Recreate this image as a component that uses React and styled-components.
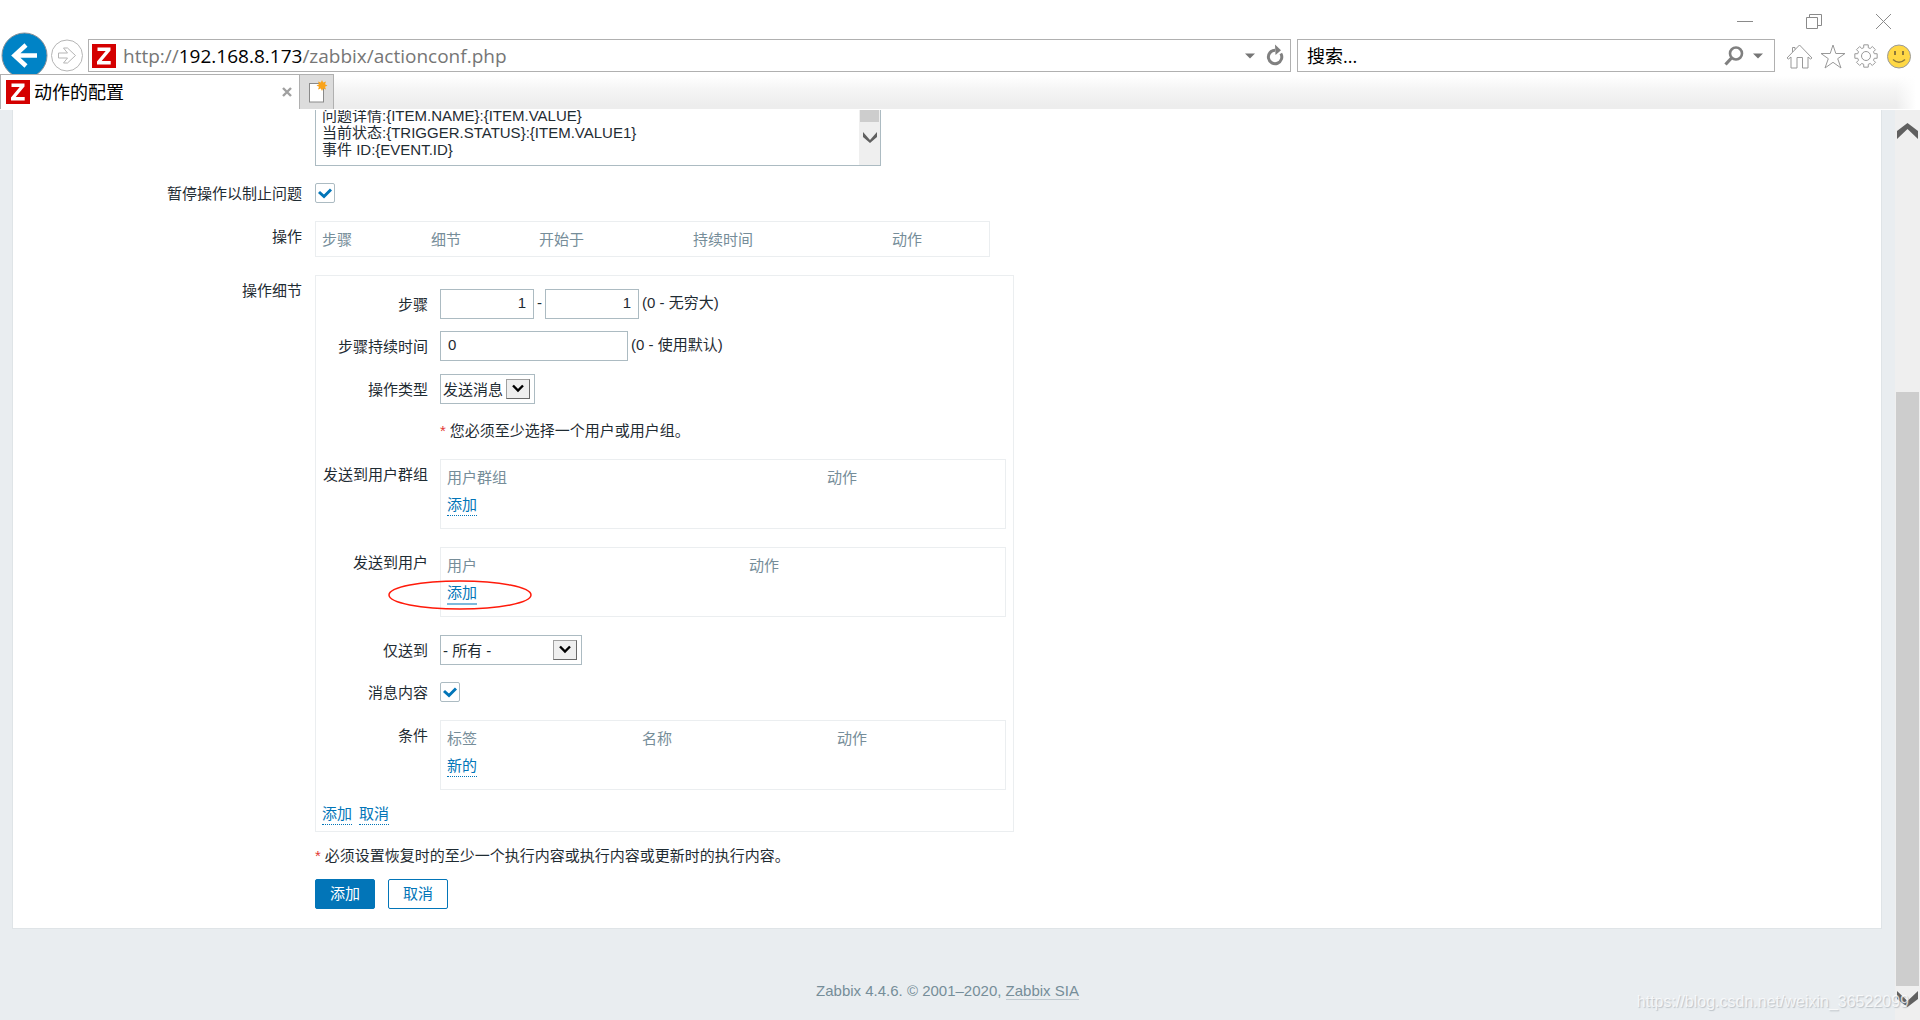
import React from "react";
import styled, { createGlobalStyle, css } from "styled-components";

const uiFont = '"Open Sans", "Noto Sans CJK SC", sans-serif';
const pageFont = '"Liberation Sans", "Noto Sans CJK SC", sans-serif';

const GlobalStyle = createGlobalStyle`
  *, *::before, *::after { box-sizing: border-box; }
  body { margin: 0; background: #fff; }
  button, input, select, textarea { font: inherit; color: inherit; margin: 0; border-radius: 0; }
`;

const Shell = styled.div`
  display: flex;
  flex-direction: column;
  min-height: 100vh;
  overflow: hidden;
  position: relative;
  font: 15px/30px ${pageFont};
  color: #1f2c33;
`;

/* ---------- browser chrome ---------- */

const TitleBar = styled.div`
  display: flex;
  justify-content: flex-end;
  gap: 53px;
  height: 39px;
  padding: 13px 28px 0 0;
`;

const PlainButton = styled.button`
  display: block;
  flex: none;
  padding: 0;
  border: 0;
  background: none;
  height: ${(p) => p.$h || 24}px;
  line-height: 0;
  svg { display: block; }
`;

const NavBar = styled.div`
  display: flex;
  align-items: flex-start;
  height: 35px;
  padding-right: 8px;
`;

const HistoryButtons = styled.div`
  display: flex;
  align-items: flex-start;
  width: 88px;
  height: 42px;
  flex: none;
  margin-top: -7px;
  overflow: hidden;
`;

const Field = styled.div`
  display: flex;
  align-items: center;
  height: 33px;
  border: 1px solid #b0b0b0;
  background: #fff;
  font: 19px/30px ${uiFont};
`;

const AddressField = styled(Field)`
  flex: 1;
  padding: 0 6px 0 3px;
  gap: 11px;
`;

const Address = styled.div`
  flex: 1;
  color: #767676;
  white-space: nowrap;
  overflow: hidden;
  margin-left: -4px;
  b { font-weight: 400; color: #000; }
`;

const SearchField = styled(Field)`
  width: 478px;
  margin: 0 11px 0 6px;
  padding: 0 11px 0 9px;
  gap: 9px;
`;

const SearchInput = styled.input`
  flex: 1;
  min-width: 0;
  padding: 0;
  border: 0;
  outline: 0;
  background: none;
  font: 18px/30px ${uiFont};
  &::placeholder { color: #000; opacity: 1; }
`;

const Tools = styled.div`
  display: flex;
  gap: 7px;
  padding-top: 5px;
`;

const TabStrip = styled.div`
  display: flex;
  height: 35px;
  margin-bottom: 1px;
  background: linear-gradient(90deg, transparent calc(100% - 24px), #fff calc(100% - 4px)),
    linear-gradient(#fff 2px, #f6f6f6 14px, #ededed 32px);
`;

const Tab = styled.div`
  display: flex;
  align-items: center;
  width: 300px;
  padding: 0 7px 0 5px;
  gap: 4px;
  border: 1px solid #b0b0b0;
  border-bottom: 0;
  background: #fff;
`;

const TabTitle = styled.span`
  flex: 1;
  color: #000;
  font: 18px/30px ${uiFont};
`;

const NewTab = styled.button`
  width: 34px;
  padding: 0;
  border: 1px solid #b0b0b0;
  border-width: 1px 1px 0 0;
  background: #dcdcdc;
  svg { display: block; margin: 0 auto; }
`;

/* ---------- page ---------- */

const Viewport = styled.div`
  display: flex;
  flex: 1;
  background: #e9edf0;
  overflow: hidden;
`;

const Page = styled.div`
  flex: 1;
  min-width: 0;
`;

const Panel = styled.main`
  margin: 0 13px 0 12px;
  padding-bottom: 19px;
  border: 1px solid #dfe4e7;
  border-top: 0;
  background: #fff;
`;

const Row = styled.div`
  display: flex;
  margin-top: ${(p) => p.$gap || 0}px;
`;

const labelBox = css`
  flex: none;
  height: 30px;
  text-align: right;
  line-height: 32px;
  white-space: nowrap;
`;

const Label = styled.label`
  ${labelBox}
  width: 289px;
  margin-right: 13px;
`;

const InnerLabel = styled.label`
  ${labelBox}
  width: 106px;
  margin-right: 12px;
`;

const Cell = styled.div`
  display: flex;
  align-items: center;
  height: 30px;
  gap: ${(p) => p.$gap || 0}px;
`;

const MessageBox = styled.div`
  display: flex;
  width: 566px;
  height: 66px;
  margin-top: -10px;
  border: 1px solid #acbbc2;
`;

const MessageText = styled.textarea`
  flex: 1;
  padding: 6px 6px 0;
  border: 0;
  outline: 0;
  resize: none;
  overflow: hidden;
  line-height: 17px;
  background: #fff;
`;

const MessageScroll = styled.div`
  width: 21px;
  background: #efefef;
`;

const MessageThumb = styled.div`
  height: 21px;
  margin: 0 1px 10px;
  background: #cdcdcd;
`;

const Tick = styled.span`
  position: relative;
  display: block;
  width: 20px;
  height: 20px;
  input {
    display: block;
    appearance: none;
    width: 20px;
    height: 20px;
    border: 1px solid #acbbc2;
    border-radius: 2px;
    background: #fff;
  }
  svg { position: absolute; left: 3px; top: 5px; pointer-events: none; }
`;

const TextInput = styled.input`
  width: ${(p) => p.$w}px;
  height: 30px;
  padding: 0 7px 2px 7px;
  border: 1px solid #acbbc2;
  background: #fff;
  text-align: ${(p) => p.$align || "left"};
`;

const Hint = styled.span`
  line-height: 28px;
  padding-bottom: 2px;
`;

const SelectWrap = styled.span`
  position: relative;
  display: block;
  width: ${(p) => p.$w}px;
  select {
    display: block;
    appearance: none;
    width: 100%;
    height: 30px;
    padding: 0 30px 2px 2px;
    border: 1px solid #acbbc2;
    background: #fff;
  }
`;

const SelectArrow = styled.span`
  position: absolute;
  right: 5px;
  top: 5px;
  width: 24px;
  height: 20px;
  border: 1px solid #a0a0a0;
  border-right-color: #696969;
  border-bottom-color: #696969;
  background: #efefef;
  pointer-events: none;
  svg { display: block; margin: 4px auto 0; }
`;

const Grid = styled.table`
  width: ${(p) => p.$w}px;
  table-layout: fixed;
  border: 1px solid #ebeef0;
  border-spacing: 0;
  padding: 5px 0 ${(p) => (p.$filled ? 9 : 3)}px;
  line-height: 26px;
  th, td { padding: 0 0 0 6px; text-align: left; font-weight: 400; white-space: nowrap; }
  th { color: #768d99; }
  td { line-height: 28px; }
`;

const Link = styled.a`
  display: inline-block;
  line-height: 20px;
  color: #0275b8;
  text-decoration: none;
  border-bottom: ${(p) => (p.$focused ? "2px solid #7db9dc" : "1px dotted #0275b8")};
`;

const Details = styled.section`
  width: 699px;
  padding: 13px 7px 2px 6px;
  border: 1px solid #ebeef0;
`;

const LinkBar = styled.div`
  display: flex;
  align-items: center;
  gap: 7px;
  height: 30px;
  margin-top: 9px;
`;

const Required = styled.p`
  margin: 0;
  span { color: #e33734; margin-right: 4px; }
`;

const ActionButton = styled.button`
  width: 60px;
  height: 30px;
  padding: 0;
  border: 1px solid #0275b8;
  border-radius: 2px;
  line-height: 28px;
  background: ${(p) => (p.$primary ? "#0275b8" : "#fff")};
  color: ${(p) => (p.$primary ? "#fff" : "#0275b8")};
`;

const Indent = styled.div`
  margin: ${(p) => p.$gap}px 0 0 302px;
  display: flex;
  gap: 13px;
`;

const Footer = styled.footer`
  margin: 52px 0 18px;
  text-align: center;
  line-height: 20px;
  color: #768d99;
  a { color: inherit; text-decoration: none; border-bottom: 1px solid #c0cad0; }
`;

const ScrollBar = styled.div`
  display: flex;
  flex-direction: column;
  width: 25px;
  padding: 13px 1px;
  background: #efefef;
`;

const ScrollThumb = styled.div`
  flex: 1;
  margin: 253px 0 5px;
  background: #cdcdcd;
`;

const Ring = styled.svg`
  position: absolute;
  left: -58px;
  top: 32px;
  overflow: visible;
  pointer-events: none;
`;

const Marked = styled.div`
  position: relative;
`;

const Watermark = styled.div`
  position: absolute;
  right: 11px;
  bottom: 8px;
  font-size: 16px;
  line-height: 20px;
  color: rgba(255, 255, 255, 0.75);
  text-shadow: 1px 1px 1px rgba(120, 130, 140, 0.4);
  pointer-events: none;
`;

/* ---------- drawings ---------- */

const Favicon = () => (
  <svg width="24" height="24" viewBox="0 0 24 24">
    <rect width="24" height="24" fill="#d40000" />
    <path d="M5.5 3.5h13v3L9.7 17h9v3.5H5v-3L13.700 7H5.500z" fill="#fff" />
  </svg>
);

const Chevron = ({ up, w = 21, h = 16, t = 8 }) => (
  <svg width={w} height={h} viewBox={`0 0 ${w} ${h}`} style={{ display: "block", margin: "0 auto" }}>
    <path
      fill="#606060"
      d={
        up
          ? `M${w / 2} 0L${w} ${h - t}V${h}L${w / 2} ${t - 2}L0 ${h}V${h - t}z`
          : `M${w / 2} ${h}L${w} ${t}V0L${w / 2} ${h - t + 2}L0 0V${t}z`
      }
    />
  </svg>
);

const Caret = () => (
  <svg width="10" height="6" viewBox="0 0 10 6">
    <path d="M0 0.500h10L5 5.500z" fill="#767676" />
  </svg>
);

const gearPath = (() => {
  const pts = [];
  for (let i = 0; i < 8; i++) {
    const a = (i * Math.PI) / 4;
    [[-0.27, 8.6], [-0.2, 11.4], [0.2, 11.4], [0.27, 8.6]].forEach(([d, r]) => {
      pts.push(`${(12 + r * Math.sin(a + d)).toFixed(2)} ${(12 - r * Math.cos(a + d)).toFixed(2)}`);
    });
  }
  return `M${pts.join("L")}z`;
})();

const TickBox = ({ id }) => (
  <Tick>
    <input type="checkbox" id={id} defaultChecked />
    <svg width="14" height="11" viewBox="0 0 14 11">
      <path d="M1 4l5 4.500L13 1.500" fill="none" stroke="#0275b8" strokeWidth="3" />
    </svg>
  </Tick>
);

const Select = ({ id, w, text }) => (
  <SelectWrap $w={w}>
    <select id={id}>
      <option>{text}</option>
    </select>
    <SelectArrow>
      <svg width="12" height="9" viewBox="0 0 12 9">
        <path d="M1 1.500l5 5 5-5" fill="none" stroke="#000" strokeWidth="2.400" />
      </svg>
    </SelectArrow>
  </SelectWrap>
);

const DataGrid = ({ w, cols, link, focused, labelledBy }) => (
  <Grid $w={w} $filled={!!link} aria-labelledby={labelledBy}>
    <colgroup>
      {cols.map(([name, width]) => (
        <col key={name} width={width} />
      ))}
    </colgroup>
    <thead>
      <tr>
        {cols.map(([name]) => (
          <th key={name}>{name}</th>
        ))}
      </tr>
    </thead>
    {link && (
      <tbody>
        <tr>
          <td colSpan={cols.length}>
            <Link href="#" $focused={focused}>{link}</Link>
          </td>
        </tr>
      </tbody>
    )}
  </Grid>
);

const message = `问题详情:{ITEM.NAME}:{ITEM.VALUE}
当前状态:{TRIGGER.STATUS}:{ITEM.VALUE1}
事件 ID:{EVENT.ID}`;

const BrowserChrome = () => (
  <header>
    <TitleBar>
      <PlainButton $h={17} aria-label="最小化">
        <svg width="16" height="17" fill="none" stroke="#8a8a8a"><path d="M0 8.500h16" /></svg>
      </PlainButton>
      <PlainButton $h={17} aria-label="还原">
        <svg width="16" height="17" fill="none" stroke="#8a8a8a">
          <path d="M.5 4.500h11v11H.5zM3.500 4.500v-3h12v11h-4" />
        </svg>
      </PlainButton>
      <PlainButton $h={17} aria-label="关闭">
        <svg width="17" height="17" fill="none" stroke="#8a8a8a"><path d="M1 1l15 15M16 1L1 16" /></svg>
      </PlainButton>
    </TitleBar>
    <NavBar>
      <HistoryButtons>
        <PlainButton $h={42} aria-label="后退">
          <svg width="49" height="42" viewBox="0 0 49 42">
            <circle cx="24.500" cy="23.500" r="22.500" fill="#0083c6" stroke="#8b9299" />
            <path d="M26 13L14.500 23.500L26 34M15 23.500h22" fill="none" stroke="#fff" strokeWidth="4.500" />
          </svg>
        </PlainButton>
        <PlainButton $h={42} aria-label="前进">
          <svg width="36" height="42" viewBox="0 0 36 42" fill="none" stroke="#b5b5b5">
            <circle cx="18" cy="23.500" r="15.500" />
            <path d="M9.500 21h9l-4-5h4l8 7.500-8 7.500h-4l4-5h-9z" />
          </svg>
        </PlainButton>
      </HistoryButtons>
      <AddressField>
        <Favicon />
        <Address role="textbox" aria-label="地址">
          http://<b>192.168.8.173</b>/zabbix/actionconf.php
        </Address>
        <Caret />
        <PlainButton aria-label="刷新">
          <svg width="18" height="24" viewBox="0 0 18 24">
            <path d="M14.800 9.500A6.700 6.700 0 1 1 9 6.300" fill="none" stroke="#808080" strokeWidth="3" />
            <path d="M9 0.500L15 6.300L9.500 11z" fill="#808080" />
          </svg>
        </PlainButton>
      </AddressField>
      <SearchField>
        <SearchInput type="search" placeholder="搜索..." aria-label="搜索" />
        <PlainButton $h={20} aria-label="搜索">
          <svg width="20" height="20" viewBox="0 0 20 20" fill="none" stroke="#808080">
            <circle cx="12" cy="7.500" r="6" strokeWidth="2.600" />
            <path d="M7.500 12L1.500 18.500" strokeWidth="3.200" />
          </svg>
        </PlainButton>
        <Caret />
      </SearchField>
      <Tools>
        <PlainButton aria-label="主页">
          <svg width="27" height="25" viewBox="0 0 27 25" fill="none" stroke="#999">
            <path d="M1 14L13.500 1L26 14L24.500 15L22 13V24H16.500V13.500H11V24H5V13L2.500 15zM6.500 8V3.500H9V5.500" />
          </svg>
        </PlainButton>
        <PlainButton aria-label="收藏夹">
          <svg width="26" height="25" viewBox="0 0 26 25" fill="none" stroke="#999">
            <path d="M13 1L15.800 9.500H25L17.700 14.700L21 24L13 18.300L5 24L8.300 14.700L1 9.500H10.200z" />
          </svg>
        </PlainButton>
        <PlainButton aria-label="工具">
          <svg width="26" height="24" viewBox="-1 0 26 24" fill="none" stroke="#999">
            <path d={gearPath} strokeLinejoin="round" />
            <circle cx="12" cy="12" r="4.500" />
          </svg>
        </PlainButton>
        <PlainButton aria-label="反馈">
          <svg width="26" height="25" viewBox="0 0 26 25">
            <circle cx="13" cy="12.500" r="11.500" fill="#ffd845" stroke="#9a9a9a" />
            <path d="M9 7v4M17 7v4" stroke="#8f7a3a" strokeWidth="2" />
            <path d="M7 15.500Q13 21 19 15.500" fill="none" stroke="#8f7a3a" strokeWidth="1.500" />
          </svg>
        </PlainButton>
      </Tools>
    </NavBar>
    <TabStrip>
      <Tab>
        <Favicon />
        <TabTitle>动作的配置</TabTitle>
        <PlainButton $h={10} aria-label="关闭标签页">
          <svg width="10" height="10" viewBox="0 0 10 10">
            <path d="M1 1l8 8M9 1L1 9" stroke="#a0a0a0" strokeWidth="2.400" />
          </svg>
        </PlainButton>
      </Tab>
      <NewTab aria-label="新建标签页">
        <svg width="22" height="24" viewBox="0 0 22 24">
          <rect x="3.500" y="3.500" width="14" height="18.500" fill="#fff" stroke="#8a8a8a" />
          <path
            d="M16 0l1.200 2.600L20 1.500l-1 2.800L21.500 5.500 19 6.700l1 2.800-2.800-1L16 11l-1.200-2.500-2.800 1 1-2.800L10.500 5.500 13 4.300l-1-2.800 2.800 1.100z"
            fill="#f9a31a"
          />
        </svg>
      </NewTab>
    </TabStrip>
  </header>
);

export default function App() {
  return (
    <>
      <GlobalStyle />
      <Shell>
        <BrowserChrome />
        <Viewport>
          <Page>
            <Panel>
              <Row>
                <Label as="span" />
                <MessageBox>
                  <MessageText aria-label="默认信息" defaultValue={message} />
                  <MessageScroll>
                    <MessageThumb />
                    <Chevron w={14} h={11} t={5} />
                  </MessageScroll>
                </MessageBox>
              </Row>
              <Row $gap={12}>
                <Label htmlFor="pause">暂停操作以制止问题</Label>
                <Cell><TickBox id="pause" /></Cell>
              </Row>
              <Row $gap={13}>
                <Label as="span" id="ops">操作</Label>
                <DataGrid
                  w={675}
                  labelledBy="ops"
                  cols={[["步骤", 109], ["细节", 108], ["开始于", 154], ["持续时间", 199], ["动作", 103]]}
                />
              </Row>
              <Row $gap={18}>
                <Label as="span" id="details">操作细节</Label>
                <Details aria-labelledby="details">
                  <Row>
                    <InnerLabel htmlFor="from">步骤</InnerLabel>
                    <Cell $gap={3}>
                      <TextInput id="from" $w={94} $align="right" defaultValue="1" />
                      <Hint>-</Hint>
                      <TextInput aria-label="步骤至" $w={94} $align="right" defaultValue="1" />
                      <Hint>(0 - 无穷大)</Hint>
                    </Cell>
                  </Row>
                  <Row $gap={12}>
                    <InnerLabel htmlFor="duration">步骤持续时间</InnerLabel>
                    <Cell $gap={3}>
                      <TextInput id="duration" $w={188} defaultValue="0" />
                      <Hint>(0 - 使用默认)</Hint>
                    </Cell>
                  </Row>
                  <Row $gap={13}>
                    <InnerLabel htmlFor="type">操作类型</InnerLabel>
                    <Select id="type" w={95} text="发送消息" />
                  </Row>
                  <Row $gap={12}>
                    <InnerLabel as="span" />
                    <Required><span>*</span>您必须至少选择一个用户或用户组。</Required>
                  </Row>
                  <Row $gap={13}>
                    <InnerLabel as="span" id="groups">发送到用户群组</InnerLabel>
                    <DataGrid w={566} labelledBy="groups" link="添加" cols={[["用户群组", 380], ["动作", 184]]} />
                  </Row>
                  <Row $gap={18}>
                    <InnerLabel as="span" id="users">发送到用户</InnerLabel>
                    <Marked>
                      <DataGrid w={566} labelledBy="users" link="添加" focused cols={[["用户", 302], ["动作", 262]]} />
                      <Ring width="151" height="32">
                        <ellipse cx="78" cy="16" rx="71" ry="14" fill="none" stroke="#ff1a0a" strokeWidth="1.500" />
                      </Ring>
                    </Marked>
                  </Row>
                  <Row $gap={18}>
                    <InnerLabel htmlFor="media">仅送到</InnerLabel>
                    <Select id="media" w={142} text="- 所有 -" />
                  </Row>
                  <Row $gap={12}>
                    <InnerLabel htmlFor="content">消息内容</InnerLabel>
                    <Cell><TickBox id="content" /></Cell>
                  </Row>
                  <Row $gap={13}>
                    <InnerLabel as="span" id="conditions">条件</InnerLabel>
                    <DataGrid
                      w={566}
                      labelledBy="conditions"
                      link="新的"
                      cols={[["标签", 195], ["名称", 195], ["动作", 174]]}
                    />
                  </Row>
                  <LinkBar>
                    <Link href="#">添加</Link>
                    <Link href="#">取消</Link>
                  </LinkBar>
                </Details>
              </Row>
              <Indent $gap={9}>
                <Required><span>*</span>必须设置恢复时的至少一个执行内容或执行内容或更新时的执行内容。</Required>
              </Indent>
              <Indent $gap={8}>
                <ActionButton $primary>添加</ActionButton>
                <ActionButton>取消</ActionButton>
              </Indent>
            </Panel>
            <Footer>
              Zabbix 4.4.6. © 2001–2020, <a href="#">Zabbix SIA</a>
            </Footer>
          </Page>
          <ScrollBar>
            <Chevron up />
            <ScrollThumb />
            <Chevron />
          </ScrollBar>
        </Viewport>
        <Watermark>https://blog.csdn.net/weixin_36522099</Watermark>
      </Shell>
    </>
  );
}
